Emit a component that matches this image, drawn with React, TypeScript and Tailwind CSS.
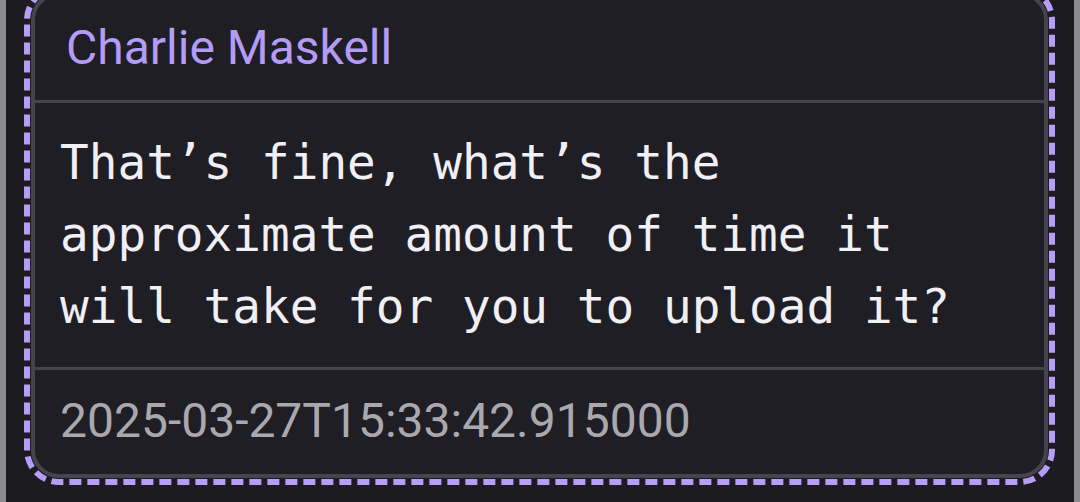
export default function App() {
  return (
    <div className="h-[502px] w-[1080px] overflow-hidden bg-[#8b8b8d] px-[6px]">
      <div className="flex h-full flex-col bg-[#1c1b20] pl-[18px] pr-[19px]">
        <div className="relative -mt-[15px] p-[7px]">
          <svg className="pointer-events-none absolute inset-0 h-full w-full" aria-hidden="true">
            <rect
              x="3"
              y="3"
              rx="32"
              ry="32"
              fill="none"
              stroke="#b49ef7"
              strokeWidth="6"
              strokeDasharray="12 6"
              style={{ width: 'calc(100% - 6px)', height: 'calc(100% - 6px)' }}
            />
          </svg>
          <div className="rounded-[28px] border-4 border-[#45444c] bg-[#1f1e24]">
            <div
              className="border-b-[3px] border-[#45444c] px-[31px] py-4 text-[48px] leading-[72px] text-[#b39cf5]"
              style={{ fontFamily: 'Roboto, "Noto Sans", sans-serif' }}
            >
              Charlie Maskell
            </div>
            <div
              className="border-b-[3px] border-[#45444c] px-[25px] py-6 text-[47.7px] leading-[72px] text-[#f0eff4]"
              style={{ fontFamily: '"DejaVu Sans Mono", monospace' }}
            >
              That’s fine, what’s the approximate amount of time it will take for you to upload it?
            </div>
            <div
              className="px-[25px] pt-[15px] pb-[17px] text-[48px] leading-[72px] text-[#a9a8ae]"
              style={{ fontFamily: 'Roboto, "Noto Sans", sans-serif' }}
            >
              2025-03-27T15:33:42.915000
            </div>
          </div>
        </div>
      </div>
    </div>
  );
}
